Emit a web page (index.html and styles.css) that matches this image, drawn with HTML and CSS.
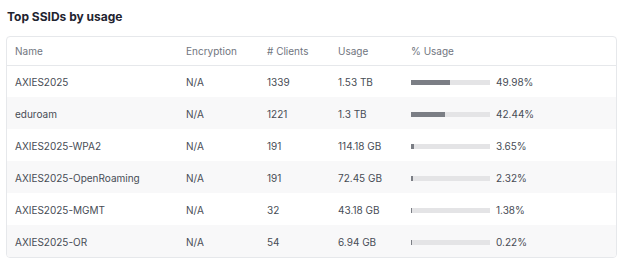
FILE: index.html
```html
<!DOCTYPE html>
<html>

<head>
  <title>Top SSIDs by usage</title>
  <link rel="stylesheet" href="styles.css">
</head>

<body>
  <div class="panel">
    <h2 class="panel-title">Top SSIDs by usage</h2>

    <div class="card">
      <table class="ssid-table">
        <colgroup>
          <col class="col-name">
          <col class="col-enc">
          <col class="col-clients">
          <col class="col-usage">
          <col>
        </colgroup>
        <thead>
          <tr>
            <th>Name</th>
            <th>Encryption</th>
            <th># Clients</th>
            <th>Usage</th>
            <th>% Usage</th>
          </tr>
        </thead>
        <tbody id="ssid-rows"></tbody>
      </table>
    </div>
  </div>

  <script>
    const ssids = [
      { name: 'AXIES2025', enc: 'N/A', clients: 1339, usage: '1.53 TB', pct: 49.98 },
      { name: 'eduroam', enc: 'N/A', clients: 1221, usage: '1.3 TB', pct: 42.44 },
      { name: 'AXIES2025-WPA2', enc: 'N/A', clients: 191, usage: '114.18 GB', pct: 3.65 },
      { name: 'AXIES2025-OpenRoaming', enc: 'N/A', clients: 191, usage: '72.45 GB', pct: 2.32 },
      { name: 'AXIES2025-MGMT', enc: 'N/A', clients: 32, usage: '43.18 GB', pct: 1.38 },
      { name: 'AXIES2025-OR', enc: 'N/A', clients: 54, usage: '6.94 GB', pct: 0.22 }
    ];

    const tbody = document.getElementById('ssid-rows');
    let html = '';

    ssids.forEach(s => {
      // keep a sliver visible for tiny shares
      const fill = Math.max(s.pct, 1.3);
      html += `
        <tr>
          <td>${s.name}</td>
          <td>${s.enc}</td>
          <td>${s.clients}</td>
          <td>${s.usage}</td>
          <td>
            <div class="pct-cell">
              <div class="bar"><div class="bar-fill" style="width: ${fill.toFixed(2)}%"></div></div>
              <span>${s.pct.toFixed(2)}%</span>
            </div>
          </td>
        </tr>`;
    });

    tbody.innerHTML = html;
  </script>
</body>

</html>
```

FILE: styles.css
```css
:root {
  --text: #474c55;
  --muted: #70757e;
  --border: #e6e8eb;
  --stripe: #f8f8f9;
}

* {
  box-sizing: border-box;
  margin: 0;
  padding: 0;
}

body {
  font-family: Inter, 'Noto Sans', sans-serif;
  background: #ffffff;
  color: var(--text);
}

.panel {
  padding: 9px 6px 0 6px;
}

.panel-title {
  font-size: 12px;
  font-weight: 700;
  color: #1f2430;
  line-height: 16px;
  padding-left: 1px;
  margin-bottom: 11px;
}

.card {
  width: 611px;
  border: 1px solid var(--border);
  border-radius: 4px;
  overflow: hidden;
}

.ssid-table {
  width: 100%;
  border-collapse: collapse;
  table-layout: fixed;
  font-size: 10px;
}

.col-name {
  width: 171px;
}

.col-enc {
  width: 81px;
}

.col-clients {
  width: 71px;
}

.col-usage {
  width: 73px;
}

.ssid-table th {
  text-align: left;
  font-weight: 400;
  color: var(--muted);
  height: 28px;
  padding-left: 8px;
  border-bottom: 1px solid var(--border);
}

.ssid-table td {
  height: 32px;
  padding-left: 8px;
  padding-top: 2px;
  white-space: nowrap;
}

.ssid-table tbody tr:nth-child(even) {
  background: var(--stripe);
}

.pct-cell {
  display: flex;
  align-items: center;
  gap: 6px;
}

.bar {
  width: 79px;
  height: 5px;
  background: #e4e4e6;
}

.bar-fill {
  height: 100%;
  background: #7b7e85;
}
```
